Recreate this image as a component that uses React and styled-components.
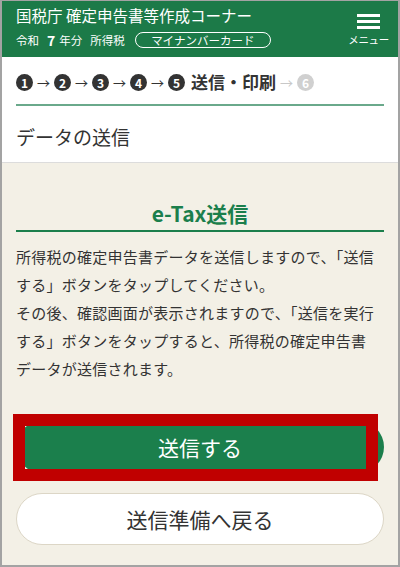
import React from "react";
import styled, { createGlobalStyle } from "styled-components";

const GlobalStyle = createGlobalStyle`
  html, body {
    margin: 0;
    padding: 0;
    background: #ffffff;
  }
  body {
    font-family: "Noto Sans CJK JP", "Noto Sans", sans-serif;
    color: #333333;
  }
`;

const Frame = styled.div`
  width: 400px;
  height: 567px;
  box-sizing: border-box;
  border: 2px solid #a3a3a3;
  border-top-width: 1px;
  display: flex;
  flex-direction: column;
  overflow: hidden;
  background: #f3f0e6;
`;

/* ---------- header ---------- */

const Header = styled.header`
  height: 56px;
  flex-shrink: 0;
  box-sizing: border-box;
  background: #1c7a48;
  color: #ffffff;
  display: flex;
  justify-content: space-between;
  align-items: flex-start;
  padding: 4px 9px 0 14px;
`;

const HeaderLeft = styled.div`
  display: flex;
  flex-direction: column;
`;

const SiteTitle = styled.div`
  font-size: 15.5px;
  line-height: 20px;
  white-space: nowrap;
`;

const SubRow = styled.div`
  display: flex;
  align-items: center;
  margin-top: 7px;
  font-size: 11.5px;
  line-height: 16px;
  white-space: nowrap;
`;

const Year = styled.span`
  font-size: 14px;
  font-weight: 700;
  margin: 0 4px 0 8px;
`;

const TaxName = styled.span`
  margin-left: 8px;
`;

const CardPill = styled.span`
  margin-left: 10px;
  width: 136px;
  height: 16px;
  box-sizing: border-box;
  border: 1.5px solid #ffffff;
  border-radius: 8px;
  display: flex;
  align-items: center;
  justify-content: center;
  font-size: 11.5px;
`;

const MenuButton = styled.button`
  background: none;
  border: none;
  color: #ffffff;
  padding: 9px 0 0;
  display: flex;
  flex-direction: column;
  align-items: center;
  cursor: pointer;
  font-family: inherit;
`;

const MenuLine = styled.span`
  display: block;
  width: 23px;
  height: 3px;
  background: #ffffff;
  margin-bottom: 3px;
`;

const MenuLabel = styled.span`
  margin-top: 2px;
  font-size: 10.5px;
  line-height: 12px;
  letter-spacing: -0.3px;
`;

/* ---------- steps ---------- */

const WhitePanel = styled.div`
  background: #ffffff;
  padding: 0 14px;
  border-bottom: 1px solid #dcdcdc;
`;

const Steps = styled.div`
  display: flex;
  align-items: center;
  height: 24px;
  padding-top: 13px;
  padding-bottom: 10px;
  border-bottom: 2px solid #6aa98b;
`;

const StepNum = styled.span`
  width: 17px;
  height: 17px;
  border-radius: 50%;
  background: ${({ $done }) => ($done ? "#333333" : "#d0d0d0")};
  color: #ffffff;
  font-size: 12px;
  font-weight: 700;
  line-height: 17px;
  text-align: center;
  flex-shrink: 0;
`;

const Arrow = styled.span`
  width: 21px;
  text-align: center;
  font-size: 13px;
  line-height: 17px;
  color: ${({ $muted }) => ($muted ? "#c8c8c8" : "#333333")};
`;

const StepLabel = styled.span`
  margin-left: 6px;
  font-size: 17px;
  font-weight: 700;
  line-height: 24px;
  color: #333333;
  white-space: nowrap;
`;

const PageTitle = styled.h1`
  margin: 0;
  padding: 17px 0 11px;
  font-size: 19px;
  font-weight: 400;
  line-height: 28px;
  color: #333333;
`;

/* ---------- content ---------- */

const Content = styled.main`
  flex: 1;
  padding: 35px 14px 0;
  display: flex;
  flex-direction: column;
`;

const SectionTitle = styled.h2`
  margin: 0;
  padding-bottom: 2px;
  border-bottom: 2px solid #1b7f4c;
  text-align: center;
  font-size: 21px;
  font-weight: 700;
  line-height: 30px;
  color: #1b7f4c;
`;

const Lead = styled.p`
  margin: 11px 0 0;
  font-size: 15px;
  line-height: 28px;
  letter-spacing: 0.25px;
  color: #333333;
  white-space: nowrap;
`;

const Actions = styled.div`
  margin-top: 38px;
  display: flex;
  flex-direction: column;
  gap: 20px;
`;

const PrimaryWrap = styled.div`
  position: relative;
`;

const PillButton = styled.button`
  width: 100%;
  height: 52px;
  box-sizing: border-box;
  border-radius: 26px;
  border: ${({ $primary }) => ($primary ? "none" : "1.5px solid #dcd6c6")};
  background: ${({ $primary }) => ($primary ? "#1b7f4c" : "#ffffff")};
  color: ${({ $primary }) => ($primary ? "#ffffff" : "#333333")};
  font-family: inherit;
  font-size: 21px;
  line-height: 1;
  cursor: pointer;
`;

/* red highlight frame laid over the primary button */
const Highlight = styled.span`
  position: absolute;
  left: -3px;
  top: -7px;
  width: 365px;
  height: 67px;
  box-sizing: border-box;
  border: 12px solid #c00000;
  pointer-events: none;
`;

const steps = [1, 2, 3, 4, 5];
const glyphs = ["1", "2", "3", "4", "5", "6"];

export default function App() {
  return (
    <>
      <GlobalStyle />
      <Frame>
        <Header>
          <HeaderLeft>
            <SiteTitle>国税庁 確定申告書等作成コーナー</SiteTitle>
            <SubRow>
              令和<Year>7</Year>年分
              <TaxName>所得税</TaxName>
              <CardPill>マイナンバーカード</CardPill>
            </SubRow>
          </HeaderLeft>
          <MenuButton type="button">
            <MenuLine />
            <MenuLine />
            <MenuLine />
            <MenuLabel>メニュー</MenuLabel>
          </MenuButton>
        </Header>

        <WhitePanel>
          <Steps>
            {steps.map((n, i) => (
              <React.Fragment key={n}>
                {i > 0 && <Arrow>→</Arrow>}
                <StepNum $done>{glyphs[i]}</StepNum>
              </React.Fragment>
            ))}
            <StepLabel>送信・印刷</StepLabel>
            <Arrow $muted>→</Arrow>
            <StepNum>{glyphs[5]}</StepNum>
          </Steps>
          <PageTitle>データの送信</PageTitle>
        </WhitePanel>

        <Content>
          <SectionTitle>e-Tax送信</SectionTitle>
          <Lead>
            所得税の確定申告書データを送信しますので、「送信
            <br />
            する」ボタンをタップしてください。
            <br />
            その後、確認画面が表示されますので、「送信を実行
            <br />
            する」ボタンをタップすると、所得税の確定申告書
            <br />
            データが送信されます。
          </Lead>
          <Actions>
            <PrimaryWrap>
              <PillButton type="button" $primary>
                送信する
              </PillButton>
              <Highlight />
            </PrimaryWrap>
            <PillButton type="button">送信準備へ戻る</PillButton>
          </Actions>
        </Content>
      </Frame>
    </>
  );
}
